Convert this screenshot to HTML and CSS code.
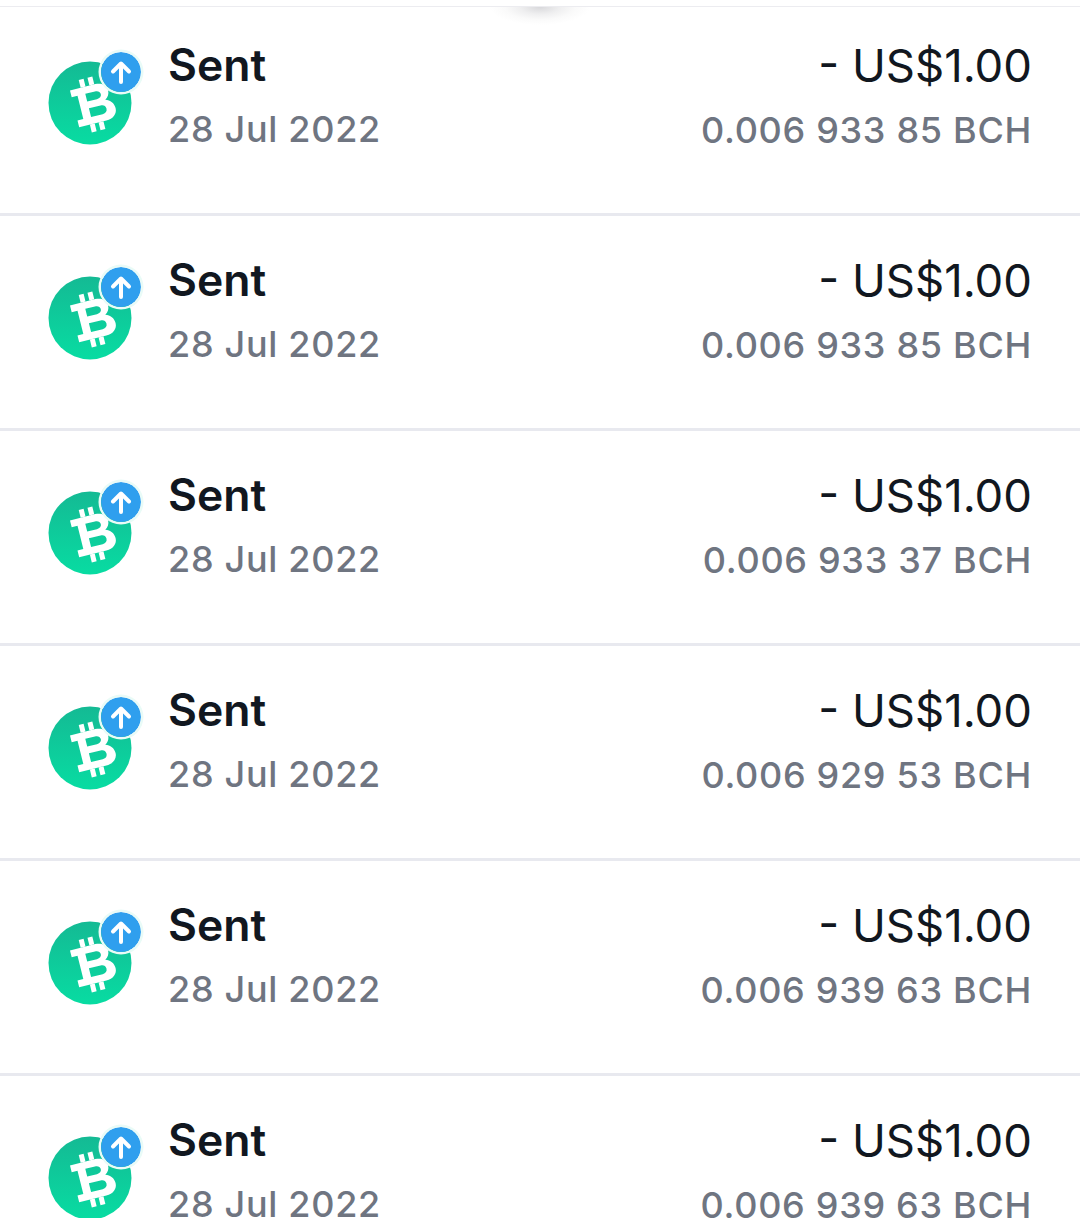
FILE: index.html
```html
<!DOCTYPE html>
<html lang="en">
<head>
<meta charset="utf-8">
<title>Transactions</title>
<link rel="stylesheet" href="styles.css">
</head>
<body>
<svg class="defs" width="0" height="0" aria-hidden="true">
  <defs>
    <linearGradient id="bch" x1="0" y1="0" x2="0" y2="1">
      <stop offset="0" stop-color="#14ba94"/>
      <stop offset="1" stop-color="#08dca2"/>
    </linearGradient>
    <symbol id="coin" viewBox="0 0 84 84">
      <circle cx="42" cy="42" r="41.5" fill="url(#bch)"/>
      <g transform="translate(2 1) rotate(-14 44 42)" fill="#fff">
        <path fill-rule="evenodd" d="M24 23H50C57 23 61 27 61 32C61 36 59 39 56 40.5C61 42 64 46 64 51C64 57 59 61 52 61H24V54H30V30H24ZM38 30V38H48C51 38 53 36.5 53 34C53 31.5 51 30 48 30ZM38 45V54H50C53 54 55 52.5 55 49.5C55 46.5 53 45 50 45Z"/>
        <path d="M35 15H40V23H35ZM44 15H49V23H44ZM35 61H40V69H35ZM44 61H49V69H44Z"/>
      </g>
    </symbol>
    <symbol id="up" viewBox="0 0 40 40">
      <circle cx="20" cy="20" r="20" fill="#2f9fee"/>
      <path d="M20 30V12M12 19.5L20 11.5L28 19.5" fill="none" stroke="#fff" stroke-width="4" stroke-linecap="round" stroke-linejoin="round"/>
    </symbol>
  </defs>
</svg>
<header class="top"><div class="handle"></div></header>
<main class="list">
  <article class="row">
    <div class="icon"><svg class="coin"><use href="#coin"/></svg><svg class="badge"><use href="#up"/></svg></div>
    <div class="info"><div class="title">Sent</div><div class="sub">28 Jul 2022</div></div>
    <div class="amount"><div class="fiat">- US$1.00</div><div class="sub">0.006 933 85 BCH</div></div>
  </article>
  <article class="row">
    <div class="icon"><svg class="coin"><use href="#coin"/></svg><svg class="badge"><use href="#up"/></svg></div>
    <div class="info"><div class="title">Sent</div><div class="sub">28 Jul 2022</div></div>
    <div class="amount"><div class="fiat">- US$1.00</div><div class="sub">0.006 933 85 BCH</div></div>
  </article>
  <article class="row">
    <div class="icon"><svg class="coin"><use href="#coin"/></svg><svg class="badge"><use href="#up"/></svg></div>
    <div class="info"><div class="title">Sent</div><div class="sub">28 Jul 2022</div></div>
    <div class="amount"><div class="fiat">- US$1.00</div><div class="sub">0.006 933 37 BCH</div></div>
  </article>
  <article class="row">
    <div class="icon"><svg class="coin"><use href="#coin"/></svg><svg class="badge"><use href="#up"/></svg></div>
    <div class="info"><div class="title">Sent</div><div class="sub">28 Jul 2022</div></div>
    <div class="amount"><div class="fiat">- US$1.00</div><div class="sub">0.006 929 53 BCH</div></div>
  </article>
  <article class="row">
    <div class="icon"><svg class="coin"><use href="#coin"/></svg><svg class="badge"><use href="#up"/></svg></div>
    <div class="info"><div class="title">Sent</div><div class="sub">28 Jul 2022</div></div>
    <div class="amount"><div class="fiat">- US$1.00</div><div class="sub">0.006 939 63 BCH</div></div>
  </article>
  <article class="row">
    <div class="icon"><svg class="coin"><use href="#coin"/></svg><svg class="badge"><use href="#up"/></svg></div>
    <div class="info"><div class="title">Sent</div><div class="sub">28 Jul 2022</div></div>
    <div class="amount"><div class="fiat">- US$1.00</div><div class="sub">0.006 939 63 BCH</div></div>
  </article>
</main>
</body>
</html>
```
FILE: styles.css
```css
html, body {
  margin: 0;
  padding: 0;
  height: 1218px;
  overflow: hidden;
  background: #fff;
}
body {
  font-family: Inter, "Liberation Sans", sans-serif;
  color: #111720;
}
.defs {
  position: absolute;
}
.top {
  height: 6px;
  margin-bottom: -6px;
  border-bottom: 1px solid #ececf0;
  box-sizing: content-box;
  position: relative;
}
.handle {
  position: absolute;
  left: 490px;
  top: 7px;
  width: 100px;
  height: 18px;
  background: radial-gradient(ellipse 50px 18px at 50% 0, #d8d8db 0, #efeff0 40%, #fafafa 70%, #fff 100%);
}
.row {
  box-sizing: border-box;
  height: 215px;
  padding: 36px 48px 0 48px;
  border-bottom: 3px solid #e8e9ef;
  display: flex;
  align-items: flex-start;
}
.icon {
  position: relative;
  width: 84px;
  height: 84px;
  margin-top: 24px;
  margin-right: 36px;
  flex: none;
}
.coin {
  display: block;
  width: 84px;
  height: 84px;
}
.badge {
  position: absolute;
  left: 52.5px;
  top: -9.5px;
  width: 40px;
  height: 40px;
  border-radius: 50%;
  box-shadow: 0 0 0 2.5px #e9fbf7;
}
.info {
  flex: 1;
}
.amount {
  text-align: right;
}
.title {
  font-size: 44.5px;
  line-height: 56px;
  font-weight: 600;
}
.fiat {
  font-size: 45.5px;
  line-height: 58px;
  font-weight: 400;
}
.sub {
  margin-top: 10px;
  font-size: 36px;
  line-height: 50px;
  font-weight: 500;
  color: #6f7581;
  letter-spacing: 0.7px;
}
.info .sub {
  margin-top: 11px;
}
```
